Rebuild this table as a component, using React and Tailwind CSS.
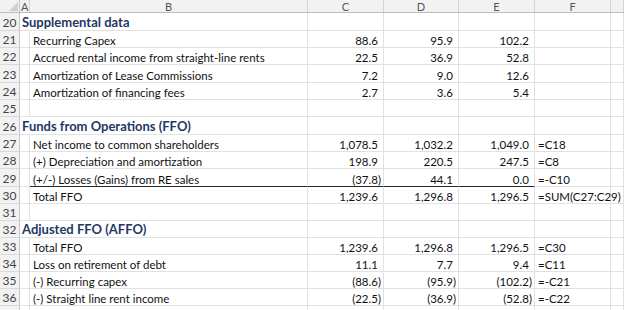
const cols = [
  { key: "A", w: "w-[10px]" },
  { key: "B", w: "w-[278px]" },
  { key: "C", w: "w-[76px]" },
  { key: "D", w: "w-[75px]" },
  { key: "E", w: "w-[76px]" },
  { key: "F", w: "w-[76px]" },
  { key: "", w: "flex-1" },
];

const rows = [
  { n: 20, h: "h-[18px]", head: "Supplemental data" },
  { n: 21, h: "h-[17px]", label: "Recurring Capex", vals: ["88.6", "95.9", "102.2"] },
  { n: 22, h: "h-[17px]", label: "Accrued rental income from straight-line rents", vals: ["22.5", "36.9", "52.8"] },
  { n: 23, h: "h-[18px]", label: "Amortization of Lease Commissions", vals: ["7.2", "9.0", "12.6"] },
  { n: 24, h: "h-[17px]", label: "Amortization of financing fees", vals: ["2.7", "3.6", "5.4"] },
  { n: 25, h: "h-[17px]" },
  { n: 26, h: "h-[18px]", head: "Funds from Operations (FFO)" },
  { n: 27, h: "h-[17px]", label: "Net income to common shareholders", vals: ["1,078.5", "1,032.2", "1,049.0"], f: "=C18" },
  { n: 28, h: "h-[17px]", label: "(+) Depreciation and amortization", vals: ["198.9", "220.5", "247.5"], f: "=C8" },
  { n: 29, h: "h-[18px]", label: "(+/-) Losses (Gains) from RE sales", vals: ["(37.8)", "44.1", "0.0"], f: "=-C10", under: true },
  { n: 30, h: "h-[17px]", label: "Total FFO", vals: ["1,239.6", "1,296.8", "1,296.5"], f: "=SUM(C27:C29)" },
  { n: 31, h: "h-[17px]" },
  { n: 32, h: "h-[17px]", head: "Adjusted FFO (AFFO)" },
  { n: 33, h: "h-[17px]", label: "Total FFO", vals: ["1,239.6", "1,296.8", "1,296.5"], f: "=C30" },
  { n: 34, h: "h-[17px]", label: "Loss on retirement of debt", vals: ["11.1", "7.7", "9.4"], f: "=C11" },
  { n: 35, h: "h-[17px]", label: "(-) Recurring capex", vals: ["(88.6)", "(95.9)", "(102.2)"], f: "=-C21" },
  { n: 36, h: "h-[17px]", label: "(-) Straight line rent income", vals: ["(22.5)", "(36.9)", "(52.8)"], f: "=-C22" },
  { n: null, h: "h-[17px]" },
];

function Num({ v }) {
  const neg = v.startsWith("(");
  return (
    <span>
      {v}
      {!neg && <span className="invisible">)</span>}
    </span>
  );
}

function Row({ r }) {
  const line = r.under ? "border-b-[#262626]" : "border-b-[#e1e1e1]";
  const cell = "border-r border-b border-r-[#e1e1e1] flex items-end pb-[1px] overflow-visible whitespace-nowrap";
  return (
    <div className={`flex ${r.h}`}>
      <div className="w-[20px] shrink-0 bg-[#f2f2f2] border-r border-b border-r-[#c6c6c6] border-b-[#dadada] flex items-end justify-center pb-[1px] text-[12px] text-[#444]">
        {r.n}
      </div>
      {r.head ? (
        <div className={`w-[288px] shrink-0 ${cell} border-b-[#e1e1e1] pl-[2px] font-bold text-[13px] text-[#1f3864]`}>
          {r.head}
        </div>
      ) : (
        <>
          <div className={`w-[10px] shrink-0 ${cell} border-b-[#e1e1e1]`} />
          <div className={`w-[278px] shrink-0 ${cell} ${line} pl-[3px]`}>{r.label}</div>
        </>
      )}
      {[0, 1, 2].map((i) => (
        <div
          key={i}
          className={`${i === 1 ? "w-[75px]" : "w-[76px]"} shrink-0 ${cell} ${line} justify-end pr-[2px]`}
        >
          {r.vals && <Num v={r.vals[i]} />}
        </div>
      ))}
      <div className={`w-[76px] shrink-0 ${cell} border-b-[#e1e1e1] pl-[3px] relative z-10`}>{r.f}</div>
      <div className={`flex-1 ${cell} border-b-[#e1e1e1]`} />
    </div>
  );
}

export default function App() {
  return (
    <div
      className="w-[624px] h-[310px] overflow-hidden bg-white text-[11.5px] text-[#111] leading-none"
      style={{ fontFamily: "Lato, 'Open Sans', sans-serif" }}
    >
      {/* column headers */}
      <div className="flex h-[13px] bg-[#f2f2f2] border-b border-b-[#bdbdbd] text-[11px] text-[#555]">
        <div className="w-[20px] shrink-0 border-r border-r-[#c6c6c6] relative">
          <svg className="absolute right-[1px] bottom-[1px]" width="9" height="9" viewBox="0 0 9 9">
            <polygon points="9,0 9,9 0,9" fill="#d0d0d0" />
          </svg>
        </div>
        {cols.map((c, i) => (
          <div
            key={i}
            className={`${c.w} shrink-0 border-r border-r-[#d4d4d4] flex items-center ${c.key === "A" ? "justify-start pl-[1px]" : "justify-center"}`}
          >
            {c.key}
          </div>
        ))}
      </div>

      {rows.map((r, i) => (
        <Row key={i} r={r} />
      ))}
    </div>
  );
}
